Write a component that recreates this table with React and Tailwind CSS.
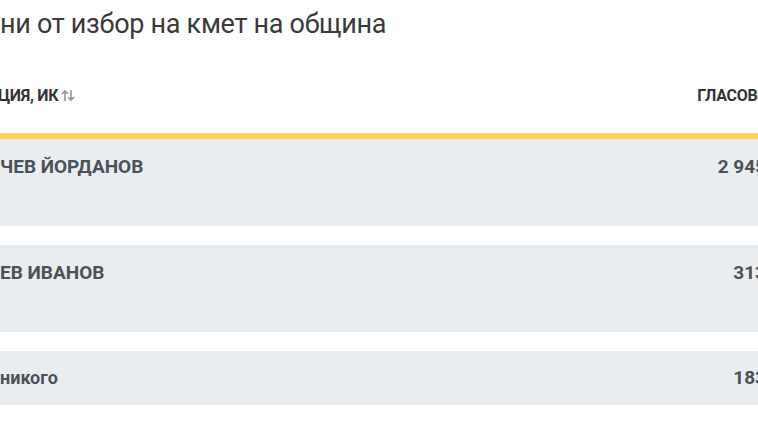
import React from 'react';

const rows = [
    { name: 'ЧЕВ ЙОРДАНОВ', votes: '2 945', tall: true },
    { name: 'ЕВ ИВАНОВ', votes: '313', tall: true },
    { name: 'никого', votes: '183', tall: false },
];

const SortIcon = () => (
    <svg className="ml-[3px] w-[14px] h-[13px]" viewBox="0 0 14 13" fill="none" stroke="#8f969c" strokeWidth="1.6">
        <path d="M4 12V2M1 5l3-3.2L7 5" />
        <path d="M10 1v10M7 8l3 3.2L13 8" />
    </svg>
);

const App = () => {
    return (
        <div className="w-[758px] h-[426px] overflow-hidden bg-white" style={{ fontFamily: 'Roboto, "Noto Sans", sans-serif' }}>
            <div className="w-[766px]">
                <h1 className="pt-[8px] h-[60px] text-[27px] leading-[32px] text-[#3a3a3a] font-normal tracking-[-0.3px]">ни от избор на кмет на община</h1>

                <div className="flex items-center justify-between h-[79px] pb-[2px] border-b-[6px] border-[#fbd45e] text-[16px] font-bold text-[#333] tracking-[-0.3px]">
                    <div className="flex items-center -ml-[2px]">
                        <span>ЦИЯ, ИК</span>
                        <SortIcon />
                    </div>
                    <span>ГЛАСОВЕ</span>
                </div>

                <div className="flex flex-col gap-[19px]">
                    {rows.map((r) => (
                        <div key={r.name} className={`flex justify-between bg-[#eaedf0] text-[#4a5259] font-bold ${r.tall ? 'h-[87px] pt-[17px] items-start' : 'h-[54px] items-center'}`}>
                            <span className={r.tall ? 'leading-[22px] text-[19px]' : 'leading-[22px] text-[18px]'}>{r.name}</span>
                            <span className="leading-[22px] text-[19px]">{r.votes}</span>
                        </div>
                    ))}
                </div>
            </div>
        </div>
    );
};

export default App;
